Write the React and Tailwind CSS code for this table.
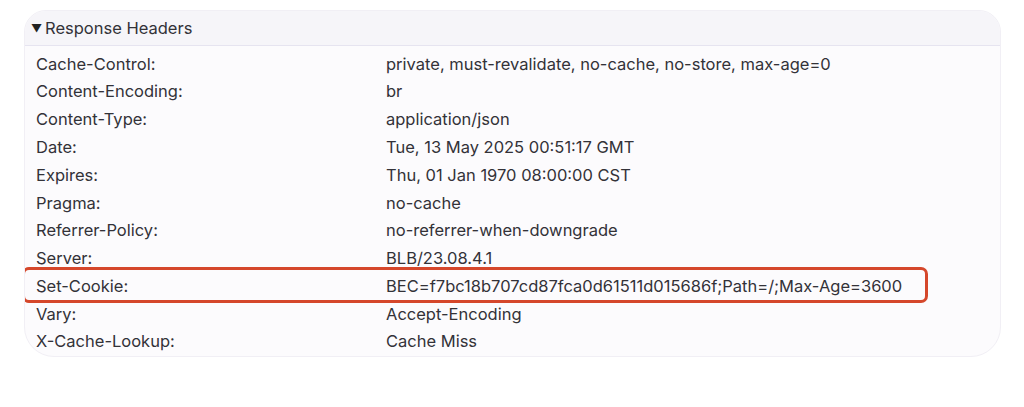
const rows = [
  ["Cache-Control:", "private, must-revalidate, no-cache, no-store, max-age=0"],
  ["Content-Encoding:", "br"],
  ["Content-Type:", "application/json"],
  ["Date:", "Tue, 13 May 2025 00:51:17 GMT"],
  ["Expires:", "Thu, 01 Jan 1970 08:00:00 CST"],
  ["Pragma:", "no-cache"],
  ["Referrer-Policy:", "no-referrer-when-downgrade"],
  ["Server:", "BLB/23.08.4.1"],
  ["Set-Cookie:", "BEC=f7bc18b707cd87fca0d61511d015686f;Path=/;Max-Age=3600", true],
  ["Vary:", "Accept-Encoding"],
  ["X-Cache-Lookup:", "Cache Miss"],
];

const App = () => {
  return (
    <div className="w-[1024px] h-[407px] bg-white pt-[10px] pl-[24px] font-['Inter',sans-serif] text-[#333238]">
      <div className="w-[977px] h-[347px] rounded-t-[22px] rounded-b-[30px] border border-[#f1eff5] bg-[#fcfbfd] overflow-hidden">
        <div className="h-[35px] flex items-center pl-[6px] bg-[#f6f5f9] border-b border-[#e6e4f0] text-[16.5px]">
          <span className="text-[11px] w-[14px] text-[#222]">▼</span>
          <span>Response Headers</span>
        </div>
        <div className="pt-[4px]">
          {rows.map(([k, v, hl]) => (
            <div
              key={k}
              className={
                "h-[27.8px] flex items-center text-[16.5px] whitespace-nowrap " +
                (hl ? "relative" : "")
              }
            >
              <span className="w-[361px] shrink-0 pl-[11px]">{k}</span>
              <span>{v}</span>
              {hl && (
                <div className="absolute left-[-3px] top-[-5px] w-[906px] h-[36px] border-[3px] border-[#d5472b] rounded-[7px]" />
              )}
            </div>
          ))}
        </div>
      </div>
    </div>
  );
};

export default App;
